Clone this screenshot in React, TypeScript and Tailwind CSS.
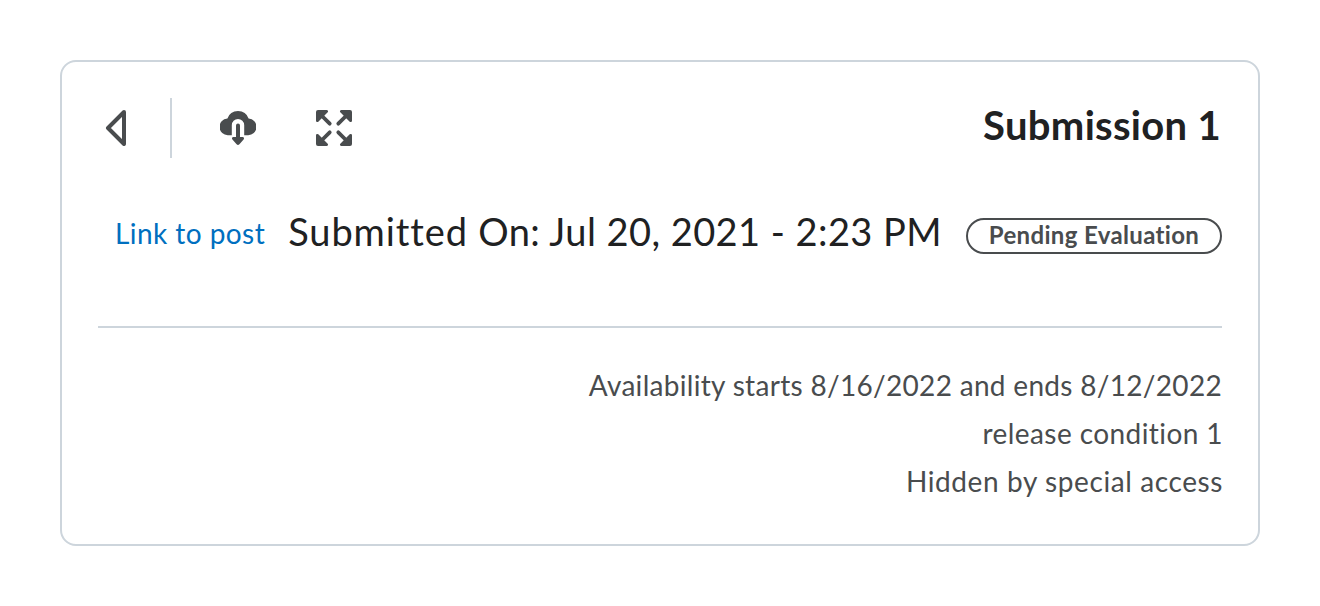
import React from "react";

function CornerArrow({ transform }: { transform?: string }) {
  return (
    <g transform={transform}>
      <path d="M2 0H10.6A1.4 1.4 0 0 1 11.7 2.3L2.3 11.7A1.4 1.4 0 0 1 0 10.6V2A2 2 0 0 1 2 0Z" />
      <path d="M5 5L13.7 13.7" stroke="#494c4e" strokeWidth="3.8" strokeLinecap="round" />
    </g>
  );
}

export default function App() {
  return (
    <main className="h-[606px] w-[1320px] bg-white p-[60px] font-['Lato',sans-serif]">
      <section className="flex h-[486px] w-[1200px] flex-col rounded-[16px] border-2 border-[#cdd5dc] px-9 pt-9 text-[#202122]">
        <header className="flex h-[60px] items-center">
          <svg className="ml-1 h-9 w-9" viewBox="0 0 36 36" fill="none" stroke="#494c4e" strokeWidth="4" strokeLinejoin="round">
            <path d="M22 2 L6 18 L22 34 Z" />
          </svg>
          <div className="ml-8 h-[60px] w-0.5 bg-[#cdd5dc]" />
          <svg className="ml-12 h-9 w-9" viewBox="0 0 36 36" fill="#494c4e">
            <path d="M7.4 8.6A11.2 11.2 0 0 1 28.6 8.6A8.3 8.3 0 0 1 27.8 25.2H24.2V15.2A6.2 6.2 0 0 0 11.8 15.2V25.2H8.2A8.3 8.3 0 0 1 7.4 8.6Z" />
            <path d="M16 15.5a2 2 0 0 1 4 0V27H22.6a1.4 1.4 0 0 1 1 2.4L19.4 34.2a2 2 0 0 1-2.8 0L12.4 29.4a1.4 1.4 0 0 1 1-2.4H16Z" />
          </svg>
          <svg className="ml-[60px] h-9 w-9" viewBox="0 0 36 36" fill="#494c4e">
            <CornerArrow />
            <CornerArrow transform="matrix(-1 0 0 1 36 0)" />
            <CornerArrow transform="matrix(1 0 0 -1 0 36)" />
            <CornerArrow transform="matrix(-1 0 0 -1 36 36)" />
          </svg>
          <h1 className="-mt-[7px] mr-px ml-auto text-[40px] leading-[60px] font-bold tracking-[0.3px]">Submission 1</h1>
        </header>
        <div className="mt-[44px] flex h-[66px] justify-end whitespace-nowrap">
          <a className="mt-[14px] text-[28px] leading-[34px] tracking-[0.44px] text-[#006fbf]">Link to post</a>
          <p className="ml-[23px] text-[38px] leading-[59px] tracking-[0.44px]">
            <span className="tracking-[0.92px]">Submitted</span> On: Jul 20, 2021 - 2:23 PM
          </p>
          <span className="mt-4 ml-6 flex h-9 w-64 items-center justify-center rounded-full border-2 border-[#494c4e] pb-0.5 text-[24px] leading-[30px] font-bold tracking-[0.35px] text-[#494c4e]">Pending Evaluation</span>
        </div>
        <div className="mt-[58px] h-0.5 bg-[#cdd5dc]" />
        <div className="mt-[33px] text-right text-[28px] leading-[48px] text-[#494c4e]">
          <p className="tracking-[0.31px]">Availability starts 8/16/2022 and ends 8/12/2022</p>
          <p className="-mr-px tracking-[0.42px]">release condition 1</p>
          <p className="-mr-px tracking-[0.6px]">Hidden by special access</p>
        </div>
      </section>
    </main>
  );
}
